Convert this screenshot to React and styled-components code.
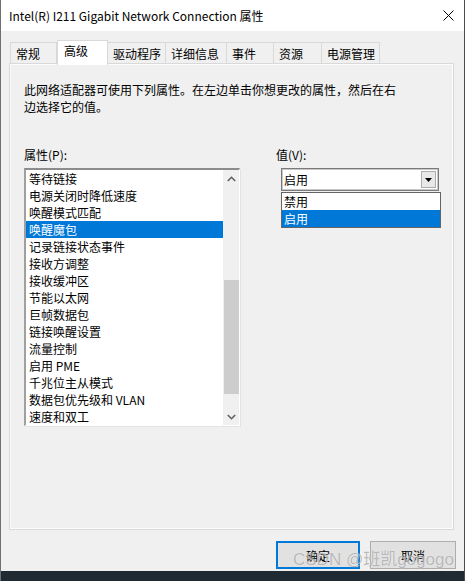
import React from 'react'
import styled, { createGlobalStyle } from 'styled-components'

const GlobalStyle = createGlobalStyle`
  html, body { margin: 0; padding: 0; background: #1f2a33; }
  body {
    font-family: "Noto Sans CJK SC", "Noto Sans", sans-serif;
    font-size: 12px;
    color: #000;
  }
`

const tabs = ['常规', '高级', '驱动程序', '详细信息', '事件', '资源', '电源管理']
const tabWidths = [47, 51, 58, 61, 47, 48, 58]

const props = [
  '等待链接',
  '电源关闭时降低速度',
  '唤醒模式匹配',
  '唤醒魔包',
  '记录链接状态事件',
  '接收方调整',
  '接收缓冲区',
  '节能以太网',
  '巨帧数据包',
  '链接唤醒设置',
  '流量控制',
  '启用 PME',
  '千兆位主从模式',
  '数据包优先级和 VLAN',
  '速度和双工',
]

const App = () => {
  const selected = 3
  const thumbTop = 93

  return (
    <>
      <GlobalStyle />
      <Window>
        <TitleBar>
          <Title>Intel(R) I211 Gigabit Network Connection 属性</Title>
          <CloseBtn>
            <svg width="11" height="11" viewBox="0 0 11 11">
              <path d="M0.5 0.5 L10.5 10.5 M10.5 0.5 L0.5 10.5" stroke="#000" strokeWidth="1" />
            </svg>
          </CloseBtn>
        </TitleBar>

        <Body>
          <TabRow>
            {tabs.map((t, i) => (
              <Tab key={t} $active={i === 1} $w={tabWidths[i]}>{t}</Tab>
            ))}
          </TabRow>

          <Panel>
            <Desc>
              此网络适配器可使用下列属性。在左边单击你想更改的属性，然后在右<br />
              边选择它的值。
            </Desc>

            <Columns>
              <LeftCol>
                <Label>属性(P):</Label>
                <ListBox>
                  <Items>
                    {props.map((p, i) => (
                      <Item key={p} $sel={i === selected}>{p}</Item>
                    ))}
                  </Items>
                  <ScrollBar>
                    <ArrowBtn>
                      <svg width="9" height="6" viewBox="0 0 9 6">
                        <path d="M0.8 5 L4.5 1.3 L8.2 5" stroke="#606060" strokeWidth="1.6" fill="none" />
                      </svg>
                    </ArrowBtn>
                    <Track>
                      <Thumb style={{ marginTop: thumbTop }} />
                    </Track>
                    <ArrowBtn>
                      <svg width="9" height="6" viewBox="0 0 9 6">
                        <path d="M0.8 1 L4.5 4.7 L8.2 1" stroke="#606060" strokeWidth="1.6" fill="none" />
                      </svg>
                    </ArrowBtn>
                  </ScrollBar>
                </ListBox>
              </LeftCol>

              <RightCol>
                <Label>值(V):</Label>
                <ComboWrap>
                  <Combo>
                    <ComboText>启用</ComboText>
                    <DropBtn>
                      <svg width="7" height="4" viewBox="0 0 7 4">
                        <path d="M0 0 L7 0 L3.5 4 Z" fill="#000" />
                      </svg>
                    </DropBtn>
                  </Combo>
                  <DropList>
                    <DropItem>禁用</DropItem>
                    <DropItem $sel>启用</DropItem>
                  </DropList>
                </ComboWrap>
              </RightCol>
            </Columns>
          </Panel>

          <ButtonRow>
            <Button $default>确定</Button>
            <Button>取消</Button>
            <Watermark>CSDN @班凯gogogo</Watermark>
          </ButtonRow>
        </Body>
        <Taskbar />
      </Window>
    </>
  )
}

export default App

const Window = styled.div`
  width: 465px;
  height: 581px;
  box-sizing: border-box;
  background: #f0f0f0;
  border-left: 1px solid #707070;
  border-right: 1px solid #4a4a4a;
  display: flex;
  flex-direction: column;
  overflow: hidden;
`

const TitleBar = styled.div`
  height: 31px;
  background: #fff;
  display: flex;
  align-items: center;
  justify-content: space-between;
  padding: 0 9px 0 8px;
  flex-shrink: 0;
`

const Title = styled.div`
  font-size: 12px;
  line-height: 16px;
  padding-top: 1px;
`

const CloseBtn = styled.div`
  width: 11px;
  height: 11px;
  display: flex;
  margin-right: 1px;
`

const Body = styled.div`
  flex: 1;
  display: flex;
  flex-direction: column;
  padding: 9px 10px 0 8px;
`

const TabRow = styled.div`
  display: flex;
  align-items: flex-end;
  height: 24px;
  padding-left: 1px;
  position: relative;
  z-index: 1;
  margin-bottom: -1px;
`

const Tab = styled.div`
  width: ${p => p.$w}px;
  box-sizing: border-box;
  height: ${p => (p.$active ? 25 : 22)}px;
  border: 1px solid #d9d9d9;
  border-bottom: ${p => (p.$active ? 'none' : '1px solid #d9d9d9')};
  border-left: ${p => (p.$active ? '1px solid #d9d9d9' : 'none')};
  background: ${p => (p.$active ? '#fff' : '#f0f0f0')};
  margin-bottom: ${p => (p.$active ? -1 : 0)}px;
  padding-left: ${p => (p.$active ? 6 : 5)}px;
  padding-top: ${p => (p.$active ? 1 : 2)}px;
  line-height: 17px;
  white-space: nowrap;
  &:first-child { border-left: 1px solid #d9d9d9; }
`

const Panel = styled.div`
  height: 467px;
  box-sizing: border-box;
  border: 1px solid #d9d9d9;
  box-shadow: inset 0 0 0 1px #fcfcfc;
  padding: 17px 14px 0 14px;
  display: flex;
  flex-direction: column;
`

const Desc = styled.div`
  line-height: 17px;
`

const Columns = styled.div`
  margin-top: 31px;
  display: flex;
`

const LeftCol = styled.div`
  width: 216px;
  display: flex;
  flex-direction: column;
`

const RightCol = styled.div`
  margin-left: 36px;
  display: flex;
  flex-direction: column;
`

const Label = styled.div`
  line-height: 17px;
  margin-bottom: 5px;
`

const ListBox = styled.div`
  height: 258px;
  box-sizing: border-box;
  border-top: 2px solid #8c8c8c;
  border-left: 2px solid #a0a0a0;
  border-right: 1px solid #fff;
  border-bottom: 1px solid #fff;
  box-shadow: 1px 1px 0 #e3e3e3;
  background: #fff;
  display: flex;
`

const Items = styled.div`
  flex: 1;
  display: flex;
  flex-direction: column;
  overflow: hidden;
`

const Item = styled.div`
  height: 17px;
  flex-shrink: 0;
  line-height: 17px;
  padding-left: 3px;
  white-space: nowrap;
  background: ${p => (p.$sel ? '#0078d7' : 'transparent')};
  color: ${p => (p.$sel ? '#fff' : '#000')};
`

const ScrollBar = styled.div`
  width: 16px;
  background: #f0f0f0;
  display: flex;
  flex-direction: column;
`

const ArrowBtn = styled.div`
  height: 17px;
  display: flex;
  align-items: center;
  justify-content: center;
`

const Track = styled.div`
  flex: 1;
  display: flex;
  flex-direction: column;
  align-items: center;
`

const Thumb = styled.div`
  width: 15px;
  height: 114px;
  background: #cdcdcd;
`

const ComboWrap = styled.div`
  position: relative;
  margin-left: 5px;
  width: 158px;
`

const Combo = styled.div`
  height: 23px;
  box-sizing: border-box;
  border: 1px solid #7a7a7a;
  box-shadow: inset 0 0 0 1px #c8c8c8;
  background: #fff;
  display: flex;
  align-items: center;
  padding: 2px;
`

const ComboText = styled.div`
  flex: 1;
  line-height: 17px;
`

const DropBtn = styled.div`
  width: 15px;
  height: 17px;
  box-sizing: border-box;
  border: 1px solid #adadad;
  background: #e8e8e8;
  display: flex;
  align-items: center;
  justify-content: center;
`

const DropList = styled.div`
  position: absolute;
  top: 24px;
  left: 0;
  width: 160px;
  box-sizing: border-box;
  border: 1px solid #646464;
  background: #fff;
  display: flex;
  flex-direction: column;
`

const DropItem = styled.div`
  height: 17px;
  line-height: 17px;
  padding-left: 2px;
  background: ${p => (p.$sel ? '#0078d7' : '#fff')};
  color: ${p => (p.$sel ? '#fff' : '#000')};
`

const ButtonRow = styled.div`
  display: flex;
  justify-content: flex-end;
  gap: 10px;
  margin-top: 11px;
  position: relative;
`

const Button = styled.div`
  width: ${p => (p.$default ? 84 : 86)}px;
  height: 28px;
  box-sizing: border-box;
  border: ${p => (p.$default ? '2px solid #0078d7' : '1px solid #adadad')};
  background: #e1e1e1;
  display: flex;
  align-items: center;
  justify-content: center;
  margin-right: ${p => (p.$default ? 0 : -2)}px;
`

const Watermark = styled.div`
  position: absolute;
  left: 284px;
  top: 4px;
  font-family: "Liberation Sans", "Noto Sans CJK SC", sans-serif;
  font-size: 17px;
  color: rgba(120, 120, 120, 0.5);
  text-shadow: 0 0 1px rgba(255, 255, 255, 0.9);
  pointer-events: none;
  white-space: nowrap;
`

const Taskbar = styled.div`
  height: 10px;
  background: #1f2a33;
  margin: 0 -1px;
  flex-shrink: 0;
`
